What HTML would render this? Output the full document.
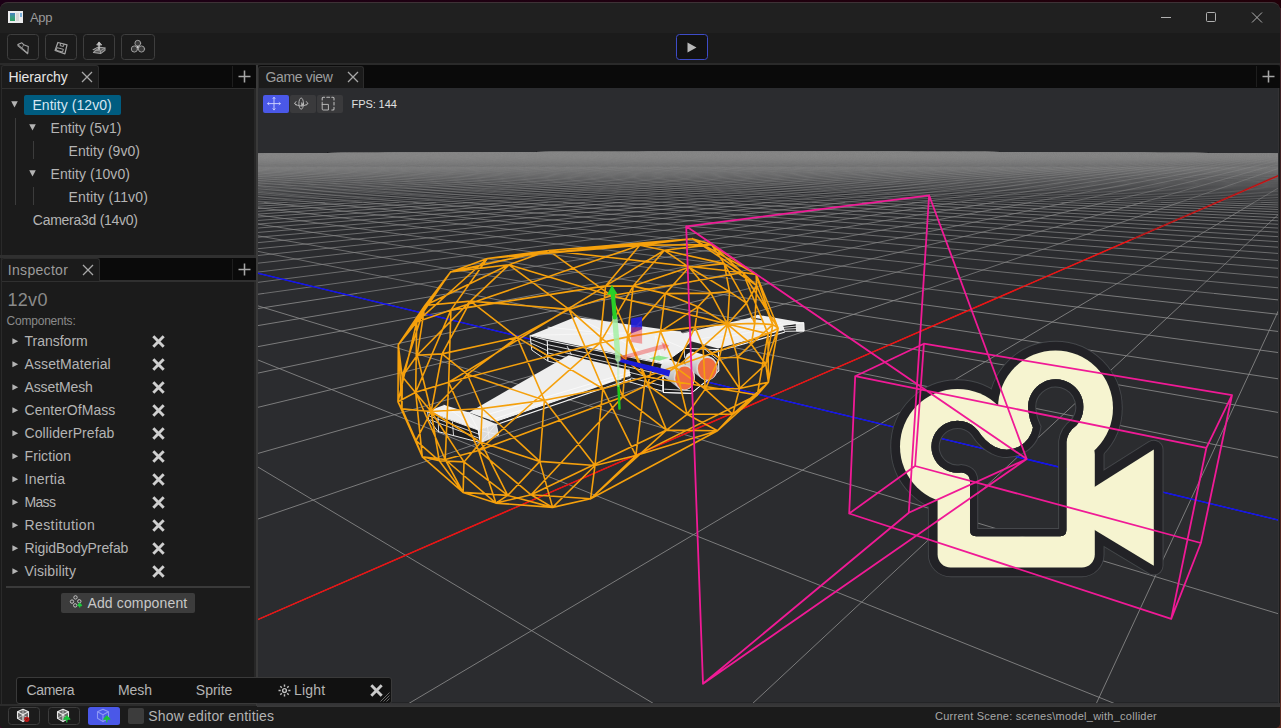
<!DOCTYPE html>
<html><head><meta charset="utf-8"><title>App</title>
<style>
html,body{margin:0;padding:0;background:#1c0016;}
body{background:linear-gradient(to right,#1c0016,#220009);}
body{width:1281px;height:728px;position:relative;overflow:hidden;font-family:"Liberation Sans",sans-serif;}
.abs,.t,.b{position:absolute;}
.t{white-space:nowrap;line-height:20px;height:20px;}
.b{box-sizing:border-box;}
#win{position:absolute;left:0;top:2px;width:1280px;height:726px;background:#1b1b1b;border-radius:8px 8px 5px 4px;overflow:hidden;}
svg{position:absolute;display:block;}
</style></head><body>
<div class="b" style="left:1272px;top:720px;width:9px;height:8px;background:#5a2a20"></div><div class="b" style="left:0;top:720px;width:8px;height:8px;background:#3a0a2c"></div>
<div id="win"></div>

<div class="b" style="left:0;top:2px;width:1280px;height:31px;background:#202020;border-radius:8px 8px 0 0;border-top:1px solid #3e3236"></div>
<svg style="left:8px;top:11px" width="16" height="13" viewBox="0 0 16 13"><defs><linearGradient id="apg" x1="0" y1="0" x2="0" y2="1"><stop offset="0" stop-color="#4a80c4"/><stop offset=".45" stop-color="#3c9a8c"/><stop offset="1" stop-color="#2fa060"/></linearGradient></defs><rect x="0" y="0" width="15" height="12" fill="#ececee"/><rect x="2" y="2" width="5" height="8" fill="url(#apg)"/><rect x="8" y="2" width="3" height="8" fill="#d6d6d6"/><rect x="12" y="2" width="2" height="4" fill="#7ab0dc"/></svg>
<div class="t" style="left:30.00px;top:7.80px;font-size:13px;letter-spacing:-0.380px;color:#9a9a9a;">App</div>
<svg style="left:1150px;top:2px" width="131" height="31" viewBox="0 0 131 31" fill="none" stroke="#b0b0b0" stroke-width="1">
<path d="M11 15.5H21"/><rect x="56.5" y="10.5" width="9" height="9" rx="1"/><path d="M102 10.5l10 10M112 10.5l-10 10"/></svg>
<div class="b" style="left:0;top:33px;width:1281px;height:31px;background:#1b1b1b"></div>
<div class="b" style="left:0;top:63.3px;width:1281px;height:1.7px;background:#2a2a2a"></div>
<div class="b" style="left:7px;top:34px;width:31.5px;height:26px;border:1.2px solid #3e3e3e;border-radius:3.5px"></div>
<div class="b" style="left:45px;top:34px;width:31.5px;height:26px;border:1.2px solid #3e3e3e;border-radius:3.5px"></div>
<div class="b" style="left:83px;top:34px;width:31.5px;height:26px;border:1.2px solid #3e3e3e;border-radius:3.5px"></div>
<div class="b" style="left:121px;top:34px;width:33.5px;height:26px;border:1.2px solid #3e3e3e;border-radius:3.5px"></div>
<svg style="left:0;top:33px" width="160" height="31" viewBox="0 33 160 31" fill="none" stroke="#a4a4a4" stroke-width="1.05" stroke-linejoin="round" stroke-linecap="round">
<path d="M17.800 44.600L21.900 42.800L23.700 44.700L28.300 46.400L27.800 53.500Z"/><path d="M17.600 45.800L27.400 53.800" stroke-width=".8"/><path d="M23.700 44.700L22.200 47.600" stroke-width=".7"/>
<path d="M57.900 42.500L67 44.900L64.900 53.800L55.100 50.500Z" stroke-width="1.25"/><path d="M60.600 43.400L60 45.600L63.400 46.500L64 44.300" stroke-width="1"/><path d="M57.500 47.800L63.400 49.300L62.500 52L56.500 50.400Z" stroke-width="1"/>
<path d="M93.200 49.600L97.800 47.200H99M100 47.200L105 48L105 50.300L100.600 53.600L93.400 52.400Z" fill="#8a8a8a" fill-opacity=".55"/><path d="M93.200 49.600L100.400 51L105 48M100.400 51L100.600 53.600" stroke-width=".8"/>
<path d="M99.050 49.600V43" stroke-width="1.500" stroke="#c4c4c4"/><path d="M96.900 44.700L99.050 41.900L101.500 44.700Z" fill="#c4c4c4" stroke="#c4c4c4" stroke-width=".8"/>
<g stroke-width=".9" stroke="#a8a8a8" fill="#5a5a5a" fill-opacity=".5"><circle cx="137.800" cy="43.200" r="2.900"/><circle cx="134.400" cy="49" r="3.100"/><circle cx="141.500" cy="49" r="3.100"/></g>
<circle cx="137.800" cy="47" r="1.100" fill="#d8d8d8" stroke="none"/>
</svg>
<div class="b" style="left:676px;top:34px;width:32px;height:26px;border:1.5px solid #3e4cc8;border-radius:3.5px;background:#121212"></div>
<svg style="left:687px;top:42px" width="10" height="11" viewBox="0 0 10 11"><path d="M0.5 0.5L9.5 5.5L0.5 10.5z" fill="#b8b8b8"/></svg>
<div class="b" style="left:2px;top:65px;width:254.5px;height:23.5px;background:#0a0a0a;border-bottom:1.5px solid #303030;border-radius:3px 3px 0 0"></div>
<div class="b" style="left:1px;top:65px;width:98px;height:23px;background:#1b1b1b;border:1px solid #2c2c2c;border-bottom:none;border-radius:3px 3px 0 0"></div>
<div class="t" style="left:8.50px;top:66.95px;font-size:14px;letter-spacing:-0.078px;color:#e6e6e6;">Hierarchy</div>
<svg style="left:81px;top:71px" width="12" height="12" viewBox="0 0 12 12" stroke="#a8a8a8" stroke-width="1.3"><path d="M1 1l10 10M11 1L1 11"/></svg>
<div class="b" style="left:232px;top:66px;width:1px;height:21px;background:#1e1e1e"></div>
<svg style="left:237.5px;top:69.5px" width="13" height="13" viewBox="0 0 13 13" stroke="#a6a6a6" stroke-width="1.55"><path d="M6.5 0.5v12M0.5 6.5h12"/></svg>
<div class="b" style="left:1px;top:88px;width:1px;height:617px;background:#2a2a2a"></div>
<div class="b" style="left:24px;top:95px;width:97px;height:20px;background:#005c80;border-radius:2px"></div>
<svg style="left:11.3px;top:100.8px" width="7" height="7" viewBox="0 0 7 7"><path d="M0.2 0.3h6.6L3.5 6.6z" fill="#b4b4b4"/></svg>
<svg style="left:29.299999999999997px;top:123.8px" width="7" height="7" viewBox="0 0 7 7"><path d="M0.2 0.3h6.6L3.5 6.6z" fill="#b4b4b4"/></svg>
<svg style="left:29.299999999999997px;top:169.8px" width="7" height="7" viewBox="0 0 7 7"><path d="M0.2 0.3h6.6L3.5 6.6z" fill="#b4b4b4"/></svg>
<div class="t" style="left:32.40px;top:95.05px;font-size:14px;letter-spacing:0.062px;color:#d6e6f2;">Entity (12v0)</div>
<div class="t" style="left:50.60px;top:118.05px;font-size:14px;letter-spacing:0.007px;color:#b4b4b4;">Entity (5v1)</div>
<div class="t" style="left:68.60px;top:141.05px;font-size:14px;letter-spacing:0.057px;color:#b4b4b4;">Entity (9v0)</div>
<div class="t" style="left:50.60px;top:164.05px;font-size:14px;letter-spacing:0.062px;color:#b4b4b4;">Entity (10v0)</div>
<div class="t" style="left:68.60px;top:187.05px;font-size:14px;letter-spacing:0.143px;color:#b4b4b4;">Entity (11v0)</div>
<div class="t" style="left:32.80px;top:210.05px;font-size:14px;letter-spacing:-0.269px;color:#b4b4b4;">Camera3d (14v0)</div>
<div class="b" style="left:14.5px;top:118px;width:1px;height:87px;background:#3c3c3c"></div>
<div class="b" style="left:32.5px;top:141px;width:1px;height:18px;background:#3c3c3c"></div>
<div class="b" style="left:32.5px;top:187px;width:1px;height:18px;background:#3c3c3c"></div>
<div class="b" style="left:0;top:255px;width:256px;height:3px;background:#303030"></div>
<div class="b" style="left:2px;top:258px;width:254.5px;height:24px;background:#0a0a0a;border-bottom:2px solid #303030;border-radius:3px 3px 0 0"></div>
<div class="b" style="left:1px;top:258px;width:99px;height:23px;background:#1b1b1b;border:1px solid #2c2c2c;border-bottom:none;border-radius:3px 3px 0 0"></div>
<div class="t" style="left:7.80px;top:259.95px;font-size:14px;letter-spacing:0.312px;color:#9c9c9c;">Inspector</div>
<svg style="left:82px;top:264px" width="12" height="12" viewBox="0 0 12 12" stroke="#a8a8a8" stroke-width="1.3"><path d="M1 1l10 10M11 1L1 11"/></svg>
<div class="b" style="left:232px;top:259px;width:1px;height:21px;background:#1e1e1e"></div>
<svg style="left:237.5px;top:262.5px" width="13" height="13" viewBox="0 0 13 13" stroke="#a6a6a6" stroke-width="1.55"><path d="M6.5 0.5v12M0.5 6.5h12"/></svg>
<div class="t" style="left:7.40px;top:289.66px;font-size:18px;letter-spacing:0.338px;color:#8a8a8a;">12v0</div>
<div class="t" style="left:6.60px;top:311.04px;font-size:12px;letter-spacing:-0.225px;color:#8a8a8a;">Components:</div>
<svg style="left:12.2px;top:337.8px" width="7" height="7" viewBox="0 0 7 7"><path d="M0.4 0.3L6.2 3.3L0.4 6.3z" fill="#b4b4b4"/></svg>
<div class="t" style="left:24.50px;top:331.05px;font-size:14px;letter-spacing:-0.009px;color:#b4b4b4;">Transform</div>
<svg style="left:151.5px;top:334.8px" width="13" height="13" viewBox="0 0 13 13" stroke="#cfcfcf" stroke-width="2.9"><path d="M1.3 1.3l10.4 10.4M11.7 1.3L1.3 11.7"/></svg>
<svg style="left:12.2px;top:360.8px" width="7" height="7" viewBox="0 0 7 7"><path d="M0.4 0.3L6.2 3.3L0.4 6.3z" fill="#b4b4b4"/></svg>
<div class="t" style="left:24.50px;top:354.05px;font-size:14px;letter-spacing:0.114px;color:#b4b4b4;">AssetMaterial</div>
<svg style="left:151.5px;top:357.8px" width="13" height="13" viewBox="0 0 13 13" stroke="#cfcfcf" stroke-width="2.9"><path d="M1.3 1.3l10.4 10.4M11.7 1.3L1.3 11.7"/></svg>
<svg style="left:12.2px;top:383.8px" width="7" height="7" viewBox="0 0 7 7"><path d="M0.4 0.3L6.2 3.3L0.4 6.3z" fill="#b4b4b4"/></svg>
<div class="t" style="left:24.50px;top:377.05px;font-size:14px;letter-spacing:-0.117px;color:#b4b4b4;">AssetMesh</div>
<svg style="left:151.5px;top:380.8px" width="13" height="13" viewBox="0 0 13 13" stroke="#cfcfcf" stroke-width="2.9"><path d="M1.3 1.3l10.4 10.4M11.7 1.3L1.3 11.7"/></svg>
<svg style="left:12.2px;top:406.8px" width="7" height="7" viewBox="0 0 7 7"><path d="M0.4 0.3L6.2 3.3L0.4 6.3z" fill="#b4b4b4"/></svg>
<div class="t" style="left:24.50px;top:400.05px;font-size:14px;letter-spacing:0.046px;color:#b4b4b4;">CenterOfMass</div>
<svg style="left:151.5px;top:403.8px" width="13" height="13" viewBox="0 0 13 13" stroke="#cfcfcf" stroke-width="2.9"><path d="M1.3 1.3l10.4 10.4M11.7 1.3L1.3 11.7"/></svg>
<svg style="left:12.2px;top:429.8px" width="7" height="7" viewBox="0 0 7 7"><path d="M0.4 0.3L6.2 3.3L0.4 6.3z" fill="#b4b4b4"/></svg>
<div class="t" style="left:24.50px;top:423.05px;font-size:14px;letter-spacing:0.084px;color:#b4b4b4;">ColliderPrefab</div>
<svg style="left:151.5px;top:426.8px" width="13" height="13" viewBox="0 0 13 13" stroke="#cfcfcf" stroke-width="2.9"><path d="M1.3 1.3l10.4 10.4M11.7 1.3L1.3 11.7"/></svg>
<svg style="left:12.2px;top:452.8px" width="7" height="7" viewBox="0 0 7 7"><path d="M0.4 0.3L6.2 3.3L0.4 6.3z" fill="#b4b4b4"/></svg>
<div class="t" style="left:24.50px;top:446.05px;font-size:14px;letter-spacing:0.087px;color:#b4b4b4;">Friction</div>
<svg style="left:151.5px;top:449.8px" width="13" height="13" viewBox="0 0 13 13" stroke="#cfcfcf" stroke-width="2.9"><path d="M1.3 1.3l10.4 10.4M11.7 1.3L1.3 11.7"/></svg>
<svg style="left:12.2px;top:475.8px" width="7" height="7" viewBox="0 0 7 7"><path d="M0.4 0.3L6.2 3.3L0.4 6.3z" fill="#b4b4b4"/></svg>
<div class="t" style="left:24.50px;top:469.05px;font-size:14px;letter-spacing:0.254px;color:#b4b4b4;">Inertia</div>
<svg style="left:151.5px;top:472.8px" width="13" height="13" viewBox="0 0 13 13" stroke="#cfcfcf" stroke-width="2.9"><path d="M1.3 1.3l10.4 10.4M11.7 1.3L1.3 11.7"/></svg>
<svg style="left:12.2px;top:498.8px" width="7" height="7" viewBox="0 0 7 7"><path d="M0.4 0.3L6.2 3.3L0.4 6.3z" fill="#b4b4b4"/></svg>
<div class="t" style="left:24.50px;top:492.05px;font-size:14px;letter-spacing:-0.663px;color:#b4b4b4;">Mass</div>
<svg style="left:151.5px;top:495.8px" width="13" height="13" viewBox="0 0 13 13" stroke="#cfcfcf" stroke-width="2.9"><path d="M1.3 1.3l10.4 10.4M11.7 1.3L1.3 11.7"/></svg>
<svg style="left:12.2px;top:521.8px" width="7" height="7" viewBox="0 0 7 7"><path d="M0.4 0.3L6.2 3.3L0.4 6.3z" fill="#b4b4b4"/></svg>
<div class="t" style="left:24.50px;top:515.05px;font-size:14px;letter-spacing:0.404px;color:#b4b4b4;">Restitution</div>
<svg style="left:151.5px;top:518.8px" width="13" height="13" viewBox="0 0 13 13" stroke="#cfcfcf" stroke-width="2.9"><path d="M1.3 1.3l10.4 10.4M11.7 1.3L1.3 11.7"/></svg>
<svg style="left:12.2px;top:544.8px" width="7" height="7" viewBox="0 0 7 7"><path d="M0.4 0.3L6.2 3.3L0.4 6.3z" fill="#b4b4b4"/></svg>
<div class="t" style="left:24.50px;top:538.05px;font-size:14px;letter-spacing:-0.084px;color:#b4b4b4;">RigidBodyPrefab</div>
<svg style="left:151.5px;top:541.8px" width="13" height="13" viewBox="0 0 13 13" stroke="#cfcfcf" stroke-width="2.9"><path d="M1.3 1.3l10.4 10.4M11.7 1.3L1.3 11.7"/></svg>
<svg style="left:12.2px;top:567.8px" width="7" height="7" viewBox="0 0 7 7"><path d="M0.4 0.3L6.2 3.3L0.4 6.3z" fill="#b4b4b4"/></svg>
<div class="t" style="left:24.50px;top:561.05px;font-size:14px;letter-spacing:0.119px;color:#b4b4b4;">Visibility</div>
<svg style="left:151.5px;top:564.8px" width="13" height="13" viewBox="0 0 13 13" stroke="#cfcfcf" stroke-width="2.9"><path d="M1.3 1.3l10.4 10.4M11.7 1.3L1.3 11.7"/></svg>
<div class="b" style="left:6px;top:586.4px;width:244px;height:1.6px;background:#3a3a3a"></div>
<div class="b" style="left:61px;top:593px;width:133.9px;height:20px;background:#3c3c3c;border-radius:2px"></div>
<svg style="left:68px;top:594px" width="16" height="16" viewBox="68 594 16 16" fill="none" stroke="#c8c8c8" stroke-width=".95"><circle cx="75.500" cy="597.400" r="1.700"/><circle cx="72" cy="601.600" r="1.700"/><circle cx="79.300" cy="601.300" r="1.700"/><circle cx="75.200" cy="605.400" r="1.700"/><path d="M79.700 603.400v4.200M77.900 605.500l1.800-2.200 1.800 2.200z" stroke="#1cc83c" fill="#1cc83c" stroke-width="1.300" stroke-linejoin="round"/></svg>
<div class="t" style="left:87.40px;top:593.05px;font-size:14px;letter-spacing:0.148px;color:#c8c8c8;">Add component</div>
<div class="b" style="left:254px;top:88px;width:2px;height:167px;background:#272727"></div><div class="b" style="left:254px;top:282px;width:2px;height:423px;background:#272727"></div>
<div class="b" style="left:256px;top:65px;width:1.5px;height:641px;background:#3a3a3a"></div>
<div class="b" style="left:0;top:704px;width:256px;height:1.5px;background:#2c2c2c"></div>
<div class="b" style="left:258px;top:65px;width:1022px;height:23px;background:#0a0a0a;border-radius:3px 3px 0 0"></div>
<div class="b" style="left:258px;top:65.5px;width:106px;height:23px;background:#1b1b1b;border:1px solid #2c2c2c;border-bottom:none;border-radius:3px 3px 0 0"></div>
<div class="t" style="left:265.40px;top:66.95px;font-size:14px;letter-spacing:-0.315px;color:#9e9e9e;">Game view</div>
<svg style="left:347px;top:71px" width="12" height="12" viewBox="0 0 12 12" stroke="#a8a8a8" stroke-width="1.3"><path d="M1 1l10 10M11 1L1 11"/></svg>
<div class="b" style="left:1256px;top:66px;width:1px;height:21px;background:#1e1e1e"></div>
<svg style="left:1261.5px;top:69.5px" width="13" height="13" viewBox="0 0 13 13" stroke="#a6a6a6" stroke-width="1.55"><path d="M6.5 0.5v12M0.5 6.5h12"/></svg>
<svg style="left:257.5px;top:88px" width="1020.0999999999999" height="614.6" viewBox="257.5 88 1020.0999999999999 614.6">
<rect x="257.5" y="88" width="1020.0999999999999" height="614.6" fill="#2b2c2f"/>
<clipPath id="gc"><path d="M255.5 153.44 L272.9 153.32 L290.2 153.20 L307.6 153.09 L324.9 152.98 L342.3 152.87 L359.6 152.77 L377.0 152.67 L394.4 152.57 L411.7 152.48 L429.1 152.39 L446.4 152.30 L463.8 152.22 L481.1 152.14 L498.5 152.07 L515.9 152.00 L533.2 151.93 L550.6 151.87 L567.9 151.81 L585.3 151.76 L602.7 151.71 L620.0 151.67 L637.4 151.63 L654.7 151.60 L672.1 151.57 L689.4 151.54 L706.8 151.52 L724.2 151.51 L741.5 151.50 L758.9 151.49 L776.2 151.49 L793.6 151.50 L810.9 151.51 L828.3 151.52 L845.7 151.54 L863.0 151.56 L880.4 151.59 L897.7 151.62 L915.1 151.66 L932.4 151.71 L949.8 151.75 L967.2 151.80 L984.5 151.86 L1001.9 151.92 L1019.2 151.99 L1036.6 152.05 L1054.0 152.13 L1071.3 152.21 L1088.7 152.29 L1106.0 152.37 L1123.4 152.46 L1140.7 152.55 L1158.1 152.65 L1175.5 152.75 L1192.8 152.85 L1210.2 152.96 L1227.5 153.07 L1244.9 153.18 L1262.2 153.30 L1279.6 153.42 L1279.6 704.6 L255.5 704.6Z"/></clipPath>
<g clip-path="url(#gc)">
<path d="M255.5 294.5L263.6 293.4M255.5 308.8L356.6 293.4M255.5 325.9L449.5 293.4M255.5 347.0L542.4 293.4M255.5 373.5L635.4 293.4M255.5 465.9L654.8 704.6M255.5 407.8L728.3 293.4M255.5 359.2L1116.7 704.6M255.5 454.0L821.2 293.4M255.5 305.3L1279.6 614.3M255.5 519.7L914.1 293.4M340.8 293.4L1279.6 520.5M255.5 620.4L1007.1 293.4M465.4 293.4L1279.6 457.8M406.4 704.6L1100.0 293.4M590.1 293.4L1279.6 412.8M750.9 704.6L1192.9 293.4M714.7 293.4L1279.6 379.1M1095.3 704.6L1279.6 307.0M839.3 293.4L1279.6 352.8M963.9 293.4L1279.6 331.7M1088.6 293.4L1279.6 314.5M1213.2 293.4L1279.6 300.1" stroke="#8a8a8a" stroke-width="0.85" fill="none"/>
<path d="M255.5 204.1L287.3 202.3M255.5 206.3L324.5 202.3M255.5 208.7L361.6 202.3M255.5 211.4L398.8 202.3M255.5 214.2L436.0 202.3M255.5 217.2L473.1 202.3M255.5 220.6L510.3 202.3M255.5 224.2L547.5 202.3M255.5 228.2L584.7 202.3M255.5 232.6L621.8 202.3M255.5 237.4L659.0 202.3M255.5 242.8L696.2 202.3M255.5 248.9L733.4 202.3M255.5 255.7L770.5 202.3M255.5 263.4L807.7 202.3M255.5 272.3L844.9 202.3M255.5 282.6L882.0 202.3M263.6 293.4L919.2 202.3M356.6 293.4L956.4 202.3M449.5 293.4L993.6 202.3M542.4 293.4L1030.7 202.3M635.4 293.4L1067.9 202.3M728.3 293.4L1105.1 202.3M821.2 293.4L1142.2 202.3M914.1 293.4L1179.4 202.3M255.5 272.8L340.8 293.4M1007.1 293.4L1216.6 202.3M255.5 251.0L465.4 293.4M1100.0 293.4L1253.8 202.3M255.5 235.5L590.1 293.4M1192.9 293.4L1279.6 212.8M255.5 223.8L714.7 293.4M255.5 214.7L839.3 293.4M255.5 207.4L963.9 293.4M263.1 202.3L1088.6 293.4M312.9 202.3L1213.2 293.4M362.8 202.3L1279.6 288.0M412.6 202.3L1279.6 277.5M462.5 202.3L1279.6 268.5M512.3 202.3L1279.6 260.6M562.2 202.3L1279.6 253.6M612.0 202.3L1279.6 247.4M661.9 202.3L1279.6 241.8M711.7 202.3L1279.6 236.8M761.6 202.3L1279.6 232.3M811.5 202.3L1279.6 228.2M861.3 202.3L1279.6 224.4M911.2 202.3L1279.6 220.9M961.0 202.3L1279.6 217.8M1010.9 202.3L1279.6 214.8M1060.7 202.3L1279.6 212.1M1110.6 202.3L1279.6 209.6M1160.4 202.3L1279.6 207.3M1210.3 202.3L1279.6 205.1M1260.1 202.3L1279.6 203.0" stroke="#8a8a8a" stroke-width="0.7" fill="none"/>
<path d="M255.5 166.9L260.3 166.8M255.5 167.3L275.8 166.8M255.5 167.7L291.3 166.8M255.5 168.1L306.8 166.8M255.5 168.5L322.3 166.8M255.5 168.9L337.8 166.8M255.5 169.3L353.3 166.8M255.5 169.7L368.8 166.8M255.5 170.2L384.3 166.8M255.5 170.6L399.7 166.8M255.5 171.1L415.2 166.8M255.5 171.6L430.7 166.8M255.5 172.1L446.2 166.8M255.5 172.7L461.7 166.8M255.5 173.2L477.2 166.8M255.5 173.8L492.7 166.8M255.5 174.4L508.2 166.8M255.5 175.0L523.6 166.8M255.5 175.6L539.1 166.8M255.5 176.3L554.6 166.8M255.5 176.9L570.1 166.8M255.5 177.7L585.6 166.8M255.5 178.4L601.1 166.8M255.5 179.2L616.6 166.8M255.5 180.0L632.1 166.8M255.5 180.8L647.6 166.8M255.5 181.7L663.0 166.8M255.5 182.6L678.5 166.8M255.5 183.6L694.0 166.8M255.5 184.6L709.5 166.8M255.5 185.6L725.0 166.8M255.5 186.8L740.5 166.8M255.5 187.9L756.0 166.8M255.5 189.2L771.5 166.8M255.5 190.5L787.0 166.8M255.5 191.8L802.4 166.8M255.5 193.3L817.9 166.8M255.5 194.8L833.4 166.8M255.5 196.4L848.9 166.8M255.5 198.2L864.4 166.8M255.5 200.0L879.9 166.8M255.5 202.0L895.4 166.8M287.3 202.3L910.9 166.8M324.5 202.3L926.3 166.8M361.6 202.3L941.8 166.8M398.8 202.3L957.3 166.8M436.0 202.3L972.8 166.8M473.1 202.3L988.3 166.8M510.3 202.3L1003.8 166.8M547.5 202.3L1019.3 166.8M584.7 202.3L1034.8 166.8M621.8 202.3L1050.3 166.8M659.0 202.3L1065.7 166.8M696.2 202.3L1081.2 166.8M733.4 202.3L1096.7 166.8M770.5 202.3L1112.2 166.8M807.7 202.3L1127.7 166.8M844.9 202.3L1143.2 166.8M882.0 202.3L1158.7 166.8M919.2 202.3L1174.2 166.8M956.4 202.3L1189.7 166.8M993.6 202.3L1205.1 166.8M1030.7 202.3L1220.6 166.8M1067.9 202.3L1236.1 166.8M1105.1 202.3L1251.6 166.8M1142.2 202.3L1267.1 166.8M1179.4 202.3L1279.6 167.8M1216.6 202.3L1279.6 174.9M1253.8 202.3L1279.6 186.9M255.5 201.4L263.1 202.3M255.5 196.4L312.9 202.3M255.5 192.2L362.8 202.3M255.5 188.6L412.6 202.3M255.5 185.5L462.5 202.3M255.5 182.7L512.3 202.3M255.5 180.3L562.2 202.3M255.5 178.2L612.0 202.3M255.5 176.2L661.9 202.3M255.5 174.5L711.7 202.3M255.5 172.9L761.6 202.3M255.5 171.5L811.5 202.3M255.5 170.2L861.3 202.3M255.5 169.0L911.2 202.3M255.5 167.9L961.0 202.3M255.5 166.9L1010.9 202.3M274.4 166.8L1060.7 202.3M295.2 166.8L1110.6 202.3M315.9 166.8L1160.4 202.3M336.7 166.8L1210.3 202.3M357.5 166.8L1260.1 202.3M378.3 166.8L1279.6 201.1M399.0 166.8L1279.6 199.3M419.8 166.8L1279.6 197.6M440.6 166.8L1279.6 196.0M461.3 166.8L1279.6 194.5M482.1 166.8L1279.6 193.1M502.9 166.8L1279.6 191.7M523.7 166.8L1279.6 190.4M544.4 166.8L1279.6 189.2M565.2 166.8L1279.6 188.0M586.0 166.8L1279.6 186.9M606.7 166.8L1279.6 185.9M627.5 166.8L1279.6 184.9M648.3 166.8L1279.6 183.9M669.1 166.8L1279.6 183.0M689.8 166.8L1279.6 182.1M710.6 166.8L1279.6 181.3M731.4 166.8L1279.6 180.4M752.1 166.8L1279.6 179.7M772.9 166.8L1279.6 178.9M793.7 166.8L1279.6 178.2M814.5 166.8L1279.6 177.5M835.2 166.8L1279.6 176.8M856.0 166.8L1279.6 176.2M876.8 166.8L1279.6 175.6M897.6 166.8L1279.6 175.0M918.3 166.8L1279.6 174.4M939.1 166.8L1279.6 173.8M959.9 166.8L1279.6 173.3M980.6 166.8L1279.6 172.8M1001.4 166.8L1279.6 172.3M1022.2 166.8L1279.6 171.8M1043.0 166.8L1279.6 171.3M1063.7 166.8L1279.6 170.9M1084.5 166.8L1279.6 170.4M1105.3 166.8L1279.6 170.0M1126.0 166.8L1279.6 169.6M1146.8 166.8L1279.6 169.2M1167.6 166.8L1279.6 168.8M1188.4 166.8L1279.6 168.4M1209.1 166.8L1279.6 168.0M1229.9 166.8L1279.6 167.6M1250.7 166.8L1279.6 167.3M1271.4 166.8L1279.6 166.9" stroke="#8a8a8a" stroke-width="0.5" fill="none"/>
<path d="M255.5 152.2L657.3 148.3M255.5 152.2L659.7 148.3M255.5 152.3L662.1 148.3M255.5 152.4L664.5 148.3M255.5 152.4L666.9 148.3M255.5 152.5L669.3 148.4M255.5 152.6L671.8 148.4M255.5 152.6L674.2 148.4M255.5 152.7L676.7 148.4M255.5 152.8L679.2 148.4M255.5 152.8L681.7 148.4M255.5 152.9L684.2 148.5M255.5 153.0L686.7 148.5M255.5 153.0L689.3 148.5M255.5 153.1L691.8 148.5M255.5 153.2L694.4 148.5M255.5 153.3L697.0 148.5M255.5 153.4L699.6 148.6M255.5 153.4L702.2 148.6M255.5 153.5L704.8 148.6M255.5 153.6L707.4 148.6M255.5 153.7L710.1 148.6M255.5 153.8L712.7 148.7M255.5 153.8L715.4 148.7M255.5 153.9L718.1 148.7M255.5 154.0L720.8 148.7M255.5 154.1L723.5 148.7M255.5 154.2L726.2 148.8M255.5 154.3L729.0 148.8M255.5 154.4L731.8 148.8M255.5 154.5L734.5 148.8M255.5 154.6L737.3 148.8M255.5 154.7L740.1 148.9M255.5 154.7L743.0 148.9M255.5 154.8L745.8 148.9M255.5 154.9L748.7 148.9M255.5 155.0L751.5 148.9M255.5 155.2L754.4 149.0M255.5 155.3L757.3 149.0M255.5 155.4L760.2 149.0M255.5 155.5L763.2 149.0M255.5 155.6L766.1 149.0M255.5 155.7L769.1 149.1M255.5 155.8L772.1 149.1M255.5 155.9L775.1 149.1M255.5 156.0L778.1 149.1M255.5 156.2L781.1 149.2M255.5 156.3L784.2 149.2M255.5 156.4L787.3 149.2M255.5 156.5L790.4 149.2M255.5 156.6L793.5 149.2M255.5 156.8L796.6 149.3M255.5 156.9L799.7 149.3M255.5 157.0L802.9 149.3M255.5 157.2L806.1 149.3M255.5 157.3L809.3 149.4M255.5 157.5L812.5 149.4M255.5 157.6L815.7 149.4M255.5 157.7L819.0 149.4M255.5 157.9L822.3 149.4M255.5 158.0L825.6 149.5M255.5 158.2L828.9 149.5M255.5 158.4L832.2 149.5M255.5 158.5L835.6 149.5M255.5 158.7L838.9 149.6M255.5 158.8L842.3 149.6M255.5 159.0L845.7 149.6M255.5 159.2L849.2 149.6M255.5 159.4L852.6 149.7M255.5 159.5L856.1 149.7M255.5 159.7L859.6 149.7M255.5 159.9L863.1 149.7M255.5 160.1L866.7 149.8M255.5 160.3L870.2 149.8M255.5 160.5L873.8 149.8M255.5 160.7L877.4 149.8M255.5 160.9L881.1 149.9M255.5 161.1L884.7 149.9M255.5 161.3L888.4 149.9M255.5 161.5L892.1 149.9M255.5 161.8L895.8 150.0M255.5 162.0L899.6 150.0M255.5 162.2L903.3 150.0M255.5 162.5L907.1 150.1M255.5 162.7L910.9 150.1M255.5 163.0L914.8 150.1M255.5 163.2L918.6 150.1M255.5 163.5L922.5 150.2M255.5 163.8L926.5 150.2M255.5 164.1L930.4 150.2M255.5 164.3L934.4 150.3M255.5 164.6L938.4 150.3M255.5 164.9L942.4 150.3M255.5 165.2L946.4 150.3M255.5 165.6L950.5 150.4M255.5 165.9L954.6 150.4M255.5 166.2L958.7 150.4M255.5 166.6L962.9 150.5M260.3 166.8L967.1 150.5M275.8 166.8L971.3 150.5M291.3 166.8L975.5 150.5M306.8 166.8L979.8 150.6M322.3 166.8L984.1 150.6M337.8 166.8L988.4 150.6M353.3 166.8L992.8 150.7M368.8 166.8L997.2 150.7M384.3 166.8L1001.6 150.7M399.7 166.8L1006.0 150.8M415.2 166.8L1010.5 150.8M430.7 166.8L1015.0 150.8M446.2 166.8L1019.6 150.9M461.7 166.8L1024.1 150.9M477.2 166.8L1028.7 150.9M492.7 166.8L1033.4 151.0M508.2 166.8L1038.0 151.0M523.6 166.8L1042.7 151.0M539.1 166.8L1047.5 151.1M554.6 166.8L1052.2 151.1M570.1 166.8L1057.1 151.1M585.6 166.8L1061.9 151.2M601.1 166.8L1066.8 151.2M616.6 166.8L1071.7 151.2M632.1 166.8L1076.6 151.3M647.6 166.8L1081.6 151.3M663.0 166.8L1086.6 151.3M678.5 166.8L1091.7 151.4M694.0 166.8L1096.8 151.4M709.5 166.8L1101.9 151.5M725.0 166.8L1107.1 151.5M740.5 166.8L1112.3 151.5M756.0 166.8L1117.5 151.6M771.5 166.8L1122.8 151.6M787.0 166.8L1128.1 151.6M802.4 166.8L1133.5 151.7M817.9 166.8L1138.9 151.7M833.4 166.8L1144.3 151.8M848.9 166.8L1149.8 151.8M864.4 166.8L1155.4 151.8M879.9 166.8L1160.9 151.9M895.4 166.8L1166.6 151.9M910.9 166.8L1172.2 152.0M926.3 166.8L1177.9 152.0M941.8 166.8L1183.7 152.0M957.3 166.8L1189.5 152.1M972.8 166.8L1195.3 152.1M988.3 166.8L1201.2 152.2M1003.8 166.8L1207.1 152.2M1019.3 166.8L1213.1 152.2M1034.8 166.8L1219.1 152.3M1050.3 166.8L1225.2 152.3M1065.7 166.8L1231.4 152.4M1081.2 166.8L1237.5 152.4M1096.7 166.8L1243.8 152.5M1112.2 166.8L1250.0 152.5M1127.7 166.8L1256.4 152.6M1143.2 166.8L1262.8 152.6M1158.7 166.8L1269.2 152.7M1174.2 166.8L1275.7 152.7M1189.7 166.8L1279.6 153.1M1205.1 166.8L1279.6 154.3M1220.6 166.8L1279.6 155.8M1236.1 166.8L1279.6 157.7M1251.6 166.8L1279.6 160.0M1267.1 166.8L1279.6 163.3M255.5 166.0L274.4 166.8M255.5 165.1L295.2 166.8M255.5 164.3L315.9 166.8M255.5 163.5L336.7 166.8M255.5 162.8L357.5 166.8M255.5 162.1L378.3 166.8M255.5 161.5L399.0 166.8M255.5 160.9L419.8 166.8M255.5 160.4L440.6 166.8M255.5 159.9L461.3 166.8M255.5 159.4L482.1 166.8M255.5 158.9L502.9 166.8M255.5 158.4L523.7 166.8M255.5 158.0L544.4 166.8M255.5 157.6L565.2 166.8M255.5 157.2L586.0 166.8M255.5 156.9L606.7 166.8M255.5 156.5L627.5 166.8M255.5 156.2L648.3 166.8M255.5 155.9L669.1 166.8M255.5 155.6L689.8 166.8M255.5 155.3L710.6 166.8M255.5 155.0L731.4 166.8M255.5 154.7L752.1 166.8M255.5 154.5L772.9 166.8M255.5 154.2L793.7 166.8M255.5 154.0L814.5 166.8M255.5 153.7L835.2 166.8M255.5 153.5L856.0 166.8M255.5 153.3L876.8 166.8M255.5 153.1L897.6 166.8M255.5 152.9L918.3 166.8M255.5 152.7L939.1 166.8M255.5 152.5L959.9 166.8M255.5 152.3L980.6 166.8M255.5 152.2L1001.4 166.8M261.3 152.1L1022.2 166.8M267.1 152.0L1043.0 166.8M272.8 152.0L1063.7 166.8M278.4 151.9L1084.5 166.8M284.0 151.9L1105.3 166.8M289.5 151.8L1126.0 166.8M295.0 151.8L1146.8 166.8M300.4 151.7L1167.6 166.8M305.8 151.7L1188.4 166.8M311.1 151.6L1209.1 166.8M316.4 151.6L1229.9 166.8M321.6 151.5L1250.7 166.8M326.7 151.5L1271.4 166.8M331.8 151.4L1279.6 166.6M336.9 151.4L1279.6 166.3M341.9 151.3L1279.6 166.0M346.8 151.3L1279.6 165.7M351.7 151.2L1279.6 165.4M356.6 151.2L1279.6 165.1M361.4 151.1L1279.6 164.8M366.1 151.1L1279.6 164.5M370.9 151.0L1279.6 164.2M375.5 151.0L1279.6 164.0M380.2 150.9L1279.6 163.7M384.7 150.9L1279.6 163.4M389.3 150.9L1279.6 163.2M393.8 150.8L1279.6 162.9M398.2 150.8L1279.6 162.7M402.7 150.7L1279.6 162.5M407.0 150.7L1279.6 162.2M411.4 150.6L1279.6 162.0M415.7 150.6L1279.6 161.8M419.9 150.6L1279.6 161.6M424.2 150.5L1279.6 161.4M428.3 150.5L1279.6 161.2M432.5 150.4L1279.6 161.0M436.6 150.4L1279.6 160.8M440.7 150.4L1279.6 160.6M444.7 150.3L1279.6 160.4M448.7 150.3L1279.6 160.2M452.7 150.2L1279.6 160.0M456.6 150.2L1279.6 159.9M460.5 150.2L1279.6 159.7M464.4 150.1L1279.6 159.5M468.2 150.1L1279.6 159.3M472.0 150.1L1279.6 159.2M475.7 150.0L1279.6 159.0M479.5 150.0L1279.6 158.9M483.2 150.0L1279.6 158.7M486.9 149.9L1279.6 158.5M490.5 149.9L1279.6 158.4M494.1 149.8L1279.6 158.2M497.7 149.8L1279.6 158.1M501.2 149.8L1279.6 158.0M504.8 149.7L1279.6 157.8M508.2 149.7L1279.6 157.7M511.7 149.7L1279.6 157.5M515.1 149.6L1279.6 157.4M518.5 149.6L1279.6 157.3M521.9 149.6L1279.6 157.1M525.3 149.5L1279.6 157.0M528.6 149.5L1279.6 156.9M531.9 149.5L1279.6 156.8M535.2 149.4L1279.6 156.6M538.4 149.4L1279.6 156.5M541.6 149.4L1279.6 156.4M544.8 149.4L1279.6 156.3M548.0 149.3L1279.6 156.2M551.2 149.3L1279.6 156.1M554.3 149.3L1279.6 156.0M557.4 149.2L1279.6 155.9M560.5 149.2L1279.6 155.7M563.5 149.2L1279.6 155.6M566.5 149.1L1279.6 155.5M569.5 149.1L1279.6 155.4M572.5 149.1L1279.6 155.3M575.5 149.1L1279.6 155.2M578.4 149.0L1279.6 155.1M581.3 149.0L1279.6 155.0M584.2 149.0L1279.6 154.9M587.1 148.9L1279.6 154.8M589.9 148.9L1279.6 154.8M592.8 148.9L1279.6 154.7M595.6 148.9L1279.6 154.6M598.4 148.8L1279.6 154.5M601.1 148.8L1279.6 154.4M603.9 148.8L1279.6 154.3M606.6 148.8L1279.6 154.2M609.3 148.7L1279.6 154.1M612.0 148.7L1279.6 154.1M614.7 148.7L1279.6 154.0M617.3 148.7L1279.6 153.9M620.0 148.6L1279.6 153.8M622.6 148.6L1279.6 153.7M625.2 148.6L1279.6 153.7M627.7 148.6L1279.6 153.6M630.3 148.5L1279.6 153.5M632.8 148.5L1279.6 153.4M635.4 148.5L1279.6 153.4M637.9 148.5L1279.6 153.3M640.3 148.4L1279.6 153.2M642.8 148.4L1279.6 153.1M645.3 148.4L1279.6 153.1M647.7 148.4L1279.6 153.0M650.1 148.3L1279.6 152.9M652.5 148.3L1279.6 152.9M654.9 148.3L1279.6 152.8M657.3 148.3L1279.6 152.7" stroke="#8a8a8a" stroke-width="0.36" fill="none"/>
<path d="M255.5 620.4L1279.6 174.9" stroke="#f01010" stroke-width="1.5"/>
<path d="M1130 239.8L1282 173.6" stroke="#2b2c2f" stroke-width="1.2" stroke-opacity="0.35"/>
<path d="M255.5 272.8L1279.6 520.5" stroke="#1010f0" stroke-width="1.5"/>
</g>
<mask id="icm" maskUnits="userSpaceOnUse" x="880" y="330" width="300" height="260"><rect x="880" y="330" width="300" height="260" fill="#fff"/><path d="M975.6 536.2Q969.5 536.2 969.5 530.0L969.5 480.0Q969.0 473.4 960.8 472.4A26.0 26.0 0 1 1 977.4 430.6Q984.8 442.2 994.2 446.7A26.5 26.5 0 0 0 1032.5 427.4Q1028.8 419.5 1028.1 412.5A27.7 27.7 0 1 1 1075.8 425.6Q1067.1 431.8 1065.9 441.7L1065.9 530.0Q1065.9 536.2 1059.7 536.2Z" fill="#000"/></mask>
<clipPath id="icc"><path d="M975.6 536.2Q969.5 536.2 969.5 530.0L969.5 480.0Q969.0 473.4 960.8 472.4A26.0 26.0 0 1 1 977.4 430.6Q984.8 442.2 994.2 446.7A26.5 26.5 0 0 0 1032.5 427.4Q1028.8 419.5 1028.1 412.5A27.7 27.7 0 1 1 1075.8 425.6Q1067.1 431.8 1065.9 441.7L1065.9 530.0Q1065.9 536.2 1059.7 536.2Z"/></clipPath>
<filter id="icb" x="-5%" y="-5%" width="110%" height="110%"><feGaussianBlur stdDeviation="0.55"/></filter><g filter="url(#icb)">
<g mask="url(#icm)">
<g fill="#45474b" stroke="#45474b" stroke-width="19.4" stroke-linejoin="round"><circle cx="957.0" cy="446.5" r="57.5"/><circle cx="1055.0" cy="408.0" r="57.5"/><rect x="937.1" y="441.0" width="157.19999999999993" height="126.5" rx="13"/><path d="M1090.0 489.5L1153.3 449.5L1153.3 565.8L1090.0 527.6Z"/></g>
<g fill="#222326" stroke="#222326" stroke-width="17.6" stroke-linejoin="round"><circle cx="957.0" cy="446.5" r="57.5"/><circle cx="1055.0" cy="408.0" r="57.5"/><rect x="937.1" y="441.0" width="157.19999999999993" height="126.5" rx="13"/><path d="M1090.0 489.5L1153.3 449.5L1153.3 565.8L1090.0 527.6Z"/></g>
<g fill="#f6f4d0"><circle cx="957.0" cy="446.5" r="57.5"/><circle cx="1055.0" cy="408.0" r="57.5"/><rect x="937.1" y="441.0" width="157.19999999999993" height="126.5" rx="13"/><path d="M1090.0 489.5L1153.3 449.5L1153.3 565.8L1090.0 527.6Z"/></g>
</g>
<g clip-path="url(#icc)" fill="none"><path d="M975.6 536.2Q969.5 536.2 969.5 530.0L969.5 480.0Q969.0 473.4 960.8 472.4A26.0 26.0 0 1 1 977.4 430.6Q984.8 442.2 994.2 446.7A26.5 26.5 0 0 0 1032.5 427.4Q1028.8 419.5 1028.1 412.5A27.7 27.7 0 1 1 1075.8 425.6Q1067.1 431.8 1065.9 441.7L1065.9 530.0Q1065.9 536.2 1059.7 536.2Z" stroke="#45474b" stroke-width="16.5"/><path d="M975.6 536.2Q969.5 536.2 969.5 530.0L969.5 480.0Q969.0 473.4 960.8 472.4A26.0 26.0 0 1 1 977.4 430.6Q984.8 442.2 994.2 446.7A26.5 26.5 0 0 0 1032.5 427.4Q1028.8 419.5 1028.1 412.5A27.7 27.7 0 1 1 1075.8 425.6Q1067.1 431.8 1065.9 441.7L1065.9 530.0Q1065.9 536.2 1059.7 536.2Z" stroke="#222326" stroke-width="14.5"/></g></g>
<path d="M666.4 337.0L748.8 318.1L757.1 314.8L803.2 322.7L802.9 330.2L783.6 330.2L718.6 348.7L691.4 341.6Z" fill="#eeeeee"/>
<path d="M697.4 339.6L780.5 322.7M703.5 342.3L782.1 324.9" fill="none" stroke="#f8f8f8" stroke-width="0.8" stroke-linecap="round"/>
<path d="M718.6 349.0L784.3 330.7" fill="none" stroke="#303032" stroke-width="1.3" stroke-linecap="round" stroke-linecap="butt"/>
<path d="M718.9 350.8L783.9 332.3" fill="none" stroke="#fafafa" stroke-width="1.2" stroke-linecap="round" stroke-linecap="butt"/>
<path d="M782.1 325.4L803.2 322.7L803.5 331.0L783.9 331.3Z" fill="#1c1c1e" stroke="#ffffff" stroke-width="0.9" stroke-linejoin="round"/>
<path d="M782.7 327.4L795.8 326.1M783.3 329.3L795.9 328.6" fill="none" stroke="#ffffff" stroke-width="0.8" stroke-linecap="round"/>
<path d="M795.7 323.6L803.2 322.7L803.5 331.0L796.0 331.1Z" fill="#e6e6e6" stroke="#ffffff" stroke-width="0.8" stroke-linejoin="round"/>
<path d="M751.1 317.8L760.9 319.6" fill="none" stroke="#333" stroke-width="1.2" stroke-linecap="round"/>
<path d="M529.6 335.4L574.9 316.9L680.0 331.7L691.4 340.5L683.8 348.4L662.7 363.5Z" fill="#eeeeee"/>
<path d="M529.6 335.4L607.9 333.4M574.9 316.9L607.9 333.4M607.9 333.4L662.7 363.5M607.9 333.4L680.0 331.7M547.5 327.2L607.9 333.4M654.6 336.1L662.7 363.5M654.6 336.1L683.8 348.4" fill="none" stroke="#fafafa" stroke-width="0.7" stroke-linecap="round"/>
<path d="M529.6 335.8L546.8 340.5L547.5 361.1L531.3 350.1Z" fill="#1c1c1e" stroke="#ffffff" stroke-width="0.9" stroke-linejoin="round"/>
<path d="M530.0 339.4L547.0 345.6M530.4 343.0L547.1 350.8M530.9 346.5L547.3 355.9" fill="none" stroke="#ffffff" stroke-width="0.8" stroke-linecap="round"/>
<path d="M546.8 340.5L662.2 363.8L662.2 391.3L629.9 382.1L547.5 361.1Z" fill="#1c1c1e" stroke="#ffffff" stroke-width="0.9" stroke-linejoin="round"/>
<path d="M546.9 344.6L662.2 369.3M547.1 348.7L662.2 374.8M547.2 352.9L662.2 380.3M547.3 357.0L662.2 385.8" fill="none" stroke="#ffffff" stroke-width="0.8" stroke-linecap="round"/>
<path d="M566.7 346.4L570.8 354.6M628.5 369.1L629.9 382.1" fill="none" stroke="#ffffff" stroke-width="0.8" stroke-linecap="round"/>
<path d="M662.7 363.5L683.8 348.4L717.8 349.6L718.3 371.0L690.6 393.4L663.0 392.5Z" fill="#1c1c1e" stroke="#ffffff" stroke-width="1.0" stroke-linejoin="round"/>
<path d="M683.8 348.4L684.1 357.4M662.7 392.5L690.6 393.4M664.2 389.2L689.9 390.7M690.6 393.4L718.3 371.0M705.0 349.9L717.8 360.5M717.8 349.6L712.5 352.1" fill="none" stroke="#ffffff" stroke-width="0.8" stroke-linecap="round"/>
<defs><linearGradient id="nac" x1="0" y1="0" x2="0" y2="1"><stop offset="0" stop-color="#f4f4f4"/><stop offset="1" stop-color="#9a9a9a"/></linearGradient></defs>
<path d="M678.5 388.4L664.0 377.3L662.3 375.8L661.1 373.8L660.3 371.5L660.0 369.1L660.3 366.6L661.1 364.3L662.3 362.3L664.0 360.8L665.9 359.9L668.0 359.5L670.0 359.9L686.6 365.1L689.1 366.4L691.3 368.4L693.0 371.0L694.0 374.1L694.4 377.4L694.0 380.7L693.0 383.7L691.3 386.4L689.1 388.4L686.6 389.6L683.8 390.1L681.1 389.6Z" fill="url(#nac)"/>
<path d="M686.5 367.2L685.3 365.3L684.5 363.1L684.2 360.8L684.5 358.4L685.3 356.2L686.5 354.3L688.2 352.9L690.1 352.0L692.1 351.7L694.2 352.0L709.2 356.6L711.8 357.8L714.0 359.8L715.7 362.3L716.7 365.2L717.1 368.3L716.7 371.4L715.7 374.4L714.0 376.9L711.8 378.8L709.2 380.0L706.5 380.4L703.8 380.0L701.2 378.8L688.2 368.6Z" fill="url(#nac)"/>
<ellipse cx="683.8" cy="377.4" rx="10.6" ry="12.7" fill="#d8d8d8"/>
<ellipse cx="684.1" cy="377.9" rx="9.4" ry="11.5" fill="#ee6c40"/>
<ellipse cx="706.5" cy="368.3" rx="10.6" ry="12.1" fill="#d8d8d8"/>
<ellipse cx="706.8" cy="368.8" rx="9.4" ry="10.9" fill="#ee6c40"/>
<path d="M468.4 412.4L568.1 355.3L628.5 369.8L629.9 375.7L495.8 422.0Z" fill="#eeeeee"/>
<path d="M481.5 416.3L629.2 372.1M490.3 420.1L629.9 374.6" fill="none" stroke="#fbfbfb" stroke-width="0.9" stroke-linecap="round"/>
<path d="M496.0 422.6L629.9 377.4" fill="none" stroke="#28282a" stroke-width="1.6" stroke-linecap="round" stroke-linecap="butt"/>
<path d="M497.0 424.2L630.2 379.0" fill="none" stroke="#fafafa" stroke-width="1.2" stroke-linecap="round" stroke-linecap="butt"/>
<path d="M427.1 411.3L443.6 405.1L468.4 412.4L495.8 424.0L477.7 430.0Z" fill="#eeeeee"/>
<path d="M427.1 411.3L468.4 412.4M443.6 405.1L477.7 430.0M468.4 412.4L477.7 430.0" fill="none" stroke="#fafafa" stroke-width="0.7" stroke-linecap="round"/>
<path d="M427.1 411.9L477.7 430.0L479.9 442.6L437.6 431.6L428.2 419.6Z" fill="#1c1c1e" stroke="#ffffff" stroke-width="0.9" stroke-linejoin="round"/>
<path d="M428.4 415.9L478.4 434.2M429.7 419.9L479.2 438.4M437.6 417.4L438.1 431.6M451.9 421.8L453.0 434.9" fill="none" stroke="#ffffff" stroke-width="0.8" stroke-linecap="round"/>
<path d="M477.7 430.0L495.8 424.0L498.0 434.9L479.9 442.6Z" fill="#dcdcdc" stroke="#ffffff" stroke-width="0.8" stroke-linejoin="round"/>
<path d="M477.7 430.0L498.0 434.9M495.8 424.0L479.9 442.6M487.0 427.0L488.7 438.8" fill="none" stroke="#f4f4f4" stroke-width="0.7" stroke-linecap="round"/>
<path d="M430.6 411.5L441.6 353.9M727.1 324.3L729.0 291.6M430.6 411.5L466.8 374.3M727.1 324.3L745.9 303.1M430.6 411.5L481.7 408.5M727.1 324.3L754.3 323.4M430.6 411.5L480.2 442.2M727.1 324.3L750.8 344.2M430.6 411.5L463.5 461.9M727.1 324.3L737.0 357.3M430.6 411.5L438.8 460.8M727.1 324.3L718.7 358.0M430.6 411.5L415.5 440.7M727.1 324.3L702.6 346.5M430.6 411.5L401.5 408.9M727.1 324.3L694.5 327.1M430.6 411.5L401.7 376.5M727.1 324.3L697.4 306.8M430.6 411.5L416.7 355.2M727.1 324.3L710.4 293.1M441.6 353.9L466.8 374.3M441.6 353.9L470.0 301.1M441.6 353.9L516.8 337.4M466.8 374.3L481.7 408.5M466.8 374.3L516.8 337.4M466.8 374.3L543.9 400.3M481.7 408.5L480.2 442.2M481.7 408.5L543.9 400.3M481.7 408.5L539.3 461.4M480.2 442.2L463.5 461.9M480.2 442.2L539.3 461.4M480.2 442.2L507.2 495.4M463.5 461.9L438.8 460.8M463.5 461.9L507.2 495.4M463.5 461.9L462.6 492.4M438.8 460.8L415.5 440.7M438.8 460.8L462.6 492.4M438.8 460.8L421.8 456.8M415.5 440.7L401.5 408.9M415.5 440.7L421.8 456.8M415.5 440.7L397.5 401.8M401.5 408.9L401.7 376.5M401.5 408.9L397.5 401.8M401.5 408.9L397.8 344.8M401.7 376.5L416.7 355.2M401.7 376.5L397.8 344.8M401.7 376.5L424.4 305.5M416.7 355.2L441.6 353.9M416.7 355.2L424.4 305.5M416.7 355.2L470.0 301.1M470.0 301.1L516.8 337.4M470.0 301.1L508.5 264.8M470.0 301.1L568.6 309.4M516.8 337.4L543.9 400.3M516.8 337.4L568.6 309.4M516.8 337.4L602.4 388.7M543.9 400.3L539.3 461.4M543.9 400.3L602.4 388.7M543.9 400.3L594.5 465.5M539.3 461.4L507.2 495.4M539.3 461.4L594.5 465.5M539.3 461.4L552.1 507.4M507.2 495.4L462.6 492.4M507.2 495.4L552.1 507.4M507.2 495.4L495.4 503.1M462.6 492.4L421.8 456.8M462.6 492.4L495.4 503.1M462.6 492.4L444.7 459.5M421.8 456.8L397.5 401.8M421.8 456.8L444.7 459.5M421.8 456.8L415.2 392.3M397.5 401.8L397.8 344.8M397.5 401.8L415.2 392.3M397.5 401.8L416.2 321.9M397.8 344.8L424.4 305.5M397.8 344.8L416.2 321.9M397.8 344.8L450.1 271.9M424.4 305.5L470.0 301.1M424.4 305.5L450.1 271.9M424.4 305.5L508.5 264.8M508.5 264.8L568.6 309.4M508.5 264.8L548.2 250.5M508.5 264.8L610.8 295.7M568.6 309.4L602.4 388.7M568.6 309.4L610.8 295.7M568.6 309.4L645.0 376.8M602.4 388.7L594.5 465.5M602.4 388.7L645.0 376.8M602.4 388.7L635.4 455.6M594.5 465.5L552.1 507.4M594.5 465.5L635.4 455.6M594.5 465.5L590.1 498.8M552.1 507.4L495.4 503.1M552.1 507.4L590.1 498.8M552.1 507.4L530.6 494.8M495.4 503.1L444.7 459.5M495.4 503.1L530.6 494.8M495.4 503.1L478.1 450.6M444.7 459.5L415.2 392.3M444.7 459.5L478.1 450.6M444.7 459.5L448.2 382.2M415.2 392.3L416.2 321.9M415.2 392.3L448.2 382.2M415.2 392.3L450.4 310.1M416.2 321.9L450.1 271.9M416.2 321.9L450.4 310.1M416.2 321.9L486.8 258.5M450.1 271.9L508.5 264.8M450.1 271.9L486.8 258.5M450.1 271.9L548.2 250.5M548.2 250.5L610.8 295.7M548.2 250.5L691.9 238.7M548.2 250.5L742.3 272.5M610.8 295.7L645.0 376.8M610.8 295.7L742.3 272.5M610.8 295.7L767.5 333.8M645.0 376.8L635.4 455.6M645.0 376.8L767.5 333.8M645.0 376.8L756.8 395.0M635.4 455.6L590.1 498.8M635.4 455.6L756.8 395.0M635.4 455.6L717.0 430.7M590.1 498.8L530.6 494.8M590.1 498.8L717.0 430.7M590.1 498.8L666.0 430.1M530.6 494.8L478.1 450.6M530.6 494.8L666.0 430.1M530.6 494.8L622.3 396.7M478.1 450.6L448.2 382.2M478.1 450.6L622.3 396.7M478.1 450.6L599.5 342.9M448.2 382.2L450.4 310.1M448.2 382.2L599.5 342.9M448.2 382.2L605.1 285.9M450.4 310.1L486.8 258.5M450.4 310.1L605.1 285.9M450.4 310.1L639.3 245.3M486.8 258.5L548.2 250.5M486.8 258.5L639.3 245.3M486.8 258.5L691.9 238.7M691.9 238.7L742.3 272.5M691.9 238.7L711.0 244.6M691.9 238.7L755.6 274.4M742.3 272.5L767.5 333.8M742.3 272.5L755.6 274.4M742.3 272.5L777.7 328.2M767.5 333.8L756.8 395.0M767.5 333.8L777.7 328.2M767.5 333.8L767.9 382.2M756.8 395.0L717.0 430.7M756.8 395.0L767.9 382.2M756.8 395.0L732.3 414.3M717.0 430.7L666.0 430.1M717.0 430.7L732.3 414.3M717.0 430.7L686.6 414.3M666.0 430.1L622.3 396.7M666.0 430.1L686.6 414.3M666.0 430.1L647.3 384.8M622.3 396.7L599.5 342.9M622.3 396.7L647.3 384.8M622.3 396.7L627.0 336.9M599.5 342.9L605.1 285.9M599.5 342.9L627.0 336.9M599.5 342.9L632.7 286.1M605.1 285.9L639.3 245.3M605.1 285.9L632.7 286.1M605.1 285.9L663.9 250.3M639.3 245.3L691.9 238.7M639.3 245.3L663.9 250.3M639.3 245.3L711.0 244.6M711.0 244.6L755.6 274.4M711.0 244.6L723.7 263.6M711.0 244.6L756.2 285.5M755.6 274.4L777.7 328.2M755.6 274.4L756.2 285.5M755.6 274.4L772.3 324.6M777.7 328.2L767.9 382.2M777.7 328.2L772.3 324.6M777.7 328.2L765.3 364.3M767.9 382.2L732.3 414.3M767.9 382.2L765.3 364.3M767.9 382.2L739.0 388.5M732.3 414.3L686.6 414.3M732.3 414.3L739.0 388.5M732.3 414.3L704.7 389.1M686.6 414.3L647.3 384.8M686.6 414.3L704.7 389.1M686.6 414.3L675.1 367.3M647.3 384.8L627.0 336.9M647.3 384.8L675.1 367.3M647.3 384.8L660.0 331.4M627.0 336.9L632.7 286.1M627.0 336.9L660.0 331.4M627.0 336.9L664.8 293.6M632.7 286.1L663.9 250.3M632.7 286.1L664.8 293.6M632.7 286.1L688.6 267.3M663.9 250.3L711.0 244.6M663.9 250.3L688.6 267.3M663.9 250.3L723.7 263.6M723.7 263.6L756.2 285.5M723.7 263.6L729.0 291.6M723.7 263.6L745.9 303.1M756.2 285.5L772.3 324.6M756.2 285.5L745.9 303.1M756.2 285.5L754.3 323.4M772.3 324.6L765.3 364.3M772.3 324.6L754.3 323.4M772.3 324.6L750.8 344.2M765.3 364.3L739.0 388.5M765.3 364.3L750.8 344.2M765.3 364.3L737.0 357.3M739.0 388.5L704.7 389.1M739.0 388.5L737.0 357.3M739.0 388.5L718.7 358.0M704.7 389.1L675.1 367.3M704.7 389.1L718.7 358.0M704.7 389.1L702.6 346.5M675.1 367.3L660.0 331.4M675.1 367.3L702.6 346.5M675.1 367.3L694.5 327.1M660.0 331.4L664.8 293.6M660.0 331.4L694.5 327.1M660.0 331.4L697.4 306.8M664.8 293.6L688.6 267.3M664.8 293.6L697.4 306.8M664.8 293.6L710.4 293.1M688.6 267.3L723.7 263.6M688.6 267.3L710.4 293.1M688.6 267.3L729.0 291.6M729.0 291.6L745.9 303.1M745.9 303.1L754.3 323.4M754.3 323.4L750.8 344.2M750.8 344.2L737.0 357.3M737.0 357.3L718.7 358.0M718.7 358.0L702.6 346.5M702.6 346.5L694.5 327.1M694.5 327.1L697.4 306.8M697.4 306.8L710.4 293.1M710.4 293.1L729.0 291.6" stroke="#f5a00c" stroke-width="1.6" fill="none" stroke-linecap="round"/>
<path d="M617.9 386.0L619.0 408.6" fill="none" stroke="#1cc81c" stroke-width="2.5" stroke-linecap="round" stroke-linecap="butt"/>
<path d="M617.5 359.0L617.9 386.0" fill="none" stroke="#b8f4b8" stroke-width="2.2" stroke-linecap="round" stroke-opacity="0.55" stroke-linecap="butt"/>
<path d="M618.4 358.1L670.0 370.4L668.4 376.6L617.8 361.4Z" fill="#1c1cd8"/>
<path d="M618.2 358.8L662.9 346.4" fill="none" stroke="#f03030" stroke-width="4.2" stroke-linecap="round" stroke-opacity="0.40" stroke-linecap="butt"/>
<path d="M660.8 341.9L668.6 345.4L664.0 350.9Z" fill="#f03030" fill-opacity="0.40"/>
<path d="M617.5 359.0L614.3 317.5" fill="none" stroke="#a4f0a4" stroke-width="5.4" stroke-linecap="round" stroke-opacity="0.85" stroke-linecap="butt"/>
<path d="M614.3 317.5L612.4 294.0" fill="none" stroke="#28d028" stroke-width="4.2" stroke-linecap="round" stroke-linecap="butt"/>
<path d="M606.6 294.8L611.4 284.9L616.9 294.0Z" fill="#28d028"/>
<path d="M630.6 318.5L641.6 316.6L641.6 329.2L630.6 333.6Z" fill="#2020e0" fill-opacity="0.9"/>
<path d="M630.6 327.2L641.6 327.2L641.6 343.7L630.6 341.9Z" fill="#f03030" fill-opacity="0.42"/>
<path d="M648.4 358.4L658.0 355.6L668.4 357.7L658.7 360.8Z" fill="#30e030" fill-opacity="0.5"/>
<path d="M1026.2 459.0L685.7 226.3M1026.2 459.0L928.6 195.3M1026.2 459.0L908.3 512.7M1026.2 459.0L702.5 683.8M685.7 226.3L928.6 195.3M928.6 195.3L908.3 512.7M908.3 512.7L702.5 683.8M702.5 683.8L685.7 226.3M854.7 376.2L923.4 343.7M923.4 343.7L1231.5 395.2M1231.5 395.2L1205.9 447.8M1205.9 447.8L854.7 376.2M848.7 513.5L914.6 466.0M914.6 466.0L1200.4 543.0M1200.4 543.0L1170.7 618.9M1170.7 618.9L848.7 513.5M854.7 376.2L848.7 513.5M923.4 343.7L914.6 466.0M1231.5 395.2L1200.4 543.0M1205.9 447.8L1170.7 618.9" fill="none" stroke="#f01a96" stroke-width="1.8" stroke-linecap="round"/>
</svg>
<div class="b" style="left:263px;top:95px;width:26px;height:18px;background:#4a58e8;border-radius:2px"></div>
<div class="b" style="left:290px;top:95px;width:25.5px;height:18px;background:#3a3a3c;border-radius:2px"></div>
<div class="b" style="left:317px;top:95px;width:25.5px;height:18px;background:#3a3a3c;border-radius:2px"></div>
<svg style="left:258px;top:88px" width="100" height="30" viewBox="258 88 100 30" fill="none" stroke-linecap="round" stroke-linejoin="round">
<g stroke="#d4d8ff" stroke-width=".9"><path d="M274 97.500V109.800M267.800 103.600H280.200"/><path d="M272.900 98.600L274 97.300L275.100 98.600M272.900 108.700L274 110L275.100 108.700M268.900 102.500L267.600 103.600L268.900 104.700M279.100 102.500L280.400 103.600L279.100 104.700" stroke-width=".8"/></g>
<g stroke="#bcbcbc" stroke-width=".9"><ellipse cx="301.200" cy="103.600" rx="2.300" ry="5.600"/><path d="M296 101.600L294.600 103.400L296 105.200M306.400 101.600L307.800 103.400L306.400 105.200"/><path d="M295 103.600C297 106.800 305.400 106.800 307.400 103.600"/><path d="M301.500 102.800v3.400l2-1.700z" fill="#bcbcbc" stroke-width=".5"/></g>
<g stroke="#bcbcbc" stroke-width="1.050"><path d="M322.200 100V98.200Q322.200 97.200 323.200 97.200H324.600M326.800 97.200H329.600M331.800 97.200H333Q334 97.200 334 98.200V100M334 102.200V105M334 107.200V109Q334 110 333 110H331.800"/><path d="M322.200 102.200V109Q322.200 110 323.200 110H328.400V104.400H322.200" stroke-width=".95"/></g>
</svg>
<div class="t" style="left:351.50px;top:94.29px;font-size:11px;letter-spacing:-0.082px;color:#e0e0e0;">FPS: 144</div>
<div class="b" style="left:15.5px;top:676.5px;width:376px;height:27px;background:#111111;border:1px solid #3a3a3a;border-radius:3px"></div>
<div class="t" style="left:26.50px;top:680.05px;font-size:14px;letter-spacing:-0.366px;color:#b4b4b4;">Camera</div>
<div class="t" style="left:118.00px;top:680.05px;font-size:14px;letter-spacing:-0.084px;color:#b4b4b4;">Mesh</div>
<div class="t" style="left:195.80px;top:680.05px;font-size:14px;letter-spacing:0.004px;color:#b4b4b4;">Sprite</div>
<svg style="left:277.5px;top:683.5px" width="13" height="13" viewBox="0 0 13 13" stroke="#bebebe" stroke-width="1.45" fill="none"><circle cx="6.500" cy="6.500" r="1.900"/><path d="M6.500 .5v2.200M6.500 10.300v2.200M.5 6.500h2.200M10.300 6.500h2.200M2.300 2.300l1.500 1.500M9.200 9.200l1.500 1.500M10.700 2.300L9.200 3.800M3.800 9.200l-1.500 1.500"/></svg>
<div class="t" style="left:294.10px;top:680.05px;font-size:14px;letter-spacing:0.188px;color:#b4b4b4;">Light</div>
<svg style="left:369.5px;top:683.5px" width="13" height="13" viewBox="0 0 13 13" stroke="#cacaca" stroke-width="2.9"><path d="M1.3 1.3l10.4 10.4M11.700 1.300L1.300 11.700"/></svg>
<svg style="left:380px;top:692px" width="10" height="10" viewBox="0 0 10 10" stroke="#686868" stroke-width="1"><path d="M0.500 9.500L9.500 0.500M3.500 9.500L9.500 3.500M6.500 9.500L9.500 6.500"/></svg>
<div class="b" style="left:0;top:706.8px;width:1280px;height:21.2px;background:#1b1b1b;border-radius:0 0 5px 4px"></div>
<div class="b" style="left:257px;top:702.6px;width:1023px;height:4.2px;background:linear-gradient(#323234,#3a3a3a)"></div>
<div class="b" style="left:1277.6px;top:88px;width:1.9px;height:616px;background:#333335"></div>
<div class="b" style="left:7.7px;top:706.5px;width:32.5px;height:18.5px;border:1.2px solid #3c3c3c;border-radius:3.5px"></div>
<div class="b" style="left:47.5px;top:706.5px;width:32.5px;height:18.5px;border:1.2px solid #3c3c3c;border-radius:3.5px"></div>
<div class="b" style="left:88px;top:706.5px;width:32.2px;height:18.5px;background:#4a58e8;border-radius:2.5px"></div>
<svg style="left:15.5px;top:707.6px" width="16" height="16" viewBox="0 0 16 16" fill="none" stroke="#e8e8e8" stroke-width="1.1" stroke-linejoin="round"><path d="M7 1.200l5.500 2.600v6.400L7 13.600 1.500 10.200V3.800z" fill="rgba(200,200,200,0.45)"/><path d="M1.500 3.800L7 6.800l5.500-3M7 6.800v6.800"/><path d="M1.500 10.200L7 7.200l5.500 3M7 1.200v6" stroke-width=".7"/><circle cx="10.800" cy="11.300" r="2.600" fill="#c01818" stroke="none"/><path d="M9.600 10.100l2.400 2.400M12 10.100l-2.400 2.400" stroke="#601010" stroke-width=".6"/></svg>
<svg style="left:55.5px;top:707.6px" width="16" height="16" viewBox="0 0 16 16" fill="none" stroke="#e8e8e8" stroke-width="1.1" stroke-linejoin="round"><path d="M7 1.200l5.500 2.600v6.400L7 13.600 1.500 10.200V3.800z" fill="rgba(200,200,200,0.45)"/><path d="M1.500 3.800L7 6.800l5.500-3M7 6.800v6.800"/><path d="M1.500 10.200L7 7.200l5.500 3M7 1.200v6" stroke-width=".7"/><path d="M10.800 8v6.500M7.800 11.200l3-3.200 3 3.200z" fill="#18c038" stroke="#18c038" stroke-width="1.200"/></svg>
<svg style="left:96px;top:707.6px" width="16" height="16" viewBox="0 0 16 16" fill="none" stroke="#8c98f4" stroke-width="1.1" stroke-linejoin="round"><path d="M7 1.200l5.500 2.600v6.400L7 13.600 1.500 10.200V3.800z" fill="none"/><path d="M1.500 3.800L7 6.800l5.500-3M7 6.800v6.800"/><path d="M10.800 8v6.500M7.800 11.200l3-3.200 3 3.200z" fill="#18c038" stroke="#18c038" stroke-width="1.200"/></svg>
<div class="b" style="left:128px;top:708px;width:16px;height:16px;background:#3c3c3c;border-radius:2px"></div>
<div class="t" style="left:148.20px;top:706.05px;font-size:14px;letter-spacing:0.191px;color:#b4b4b4;">Show editor entities</div>
<div class="t" style="left:935.00px;top:706.09px;font-size:11px;letter-spacing:0.255px;color:#a8a8a8;">Current Scene: scenes\model_with_collider</div>
<div class="b" style="left:1279.6px;top:8px;width:1.4px;height:720px;background:linear-gradient(#3a2026,#4a2420 50%,#5a2a20)"></div>
</body></html>
